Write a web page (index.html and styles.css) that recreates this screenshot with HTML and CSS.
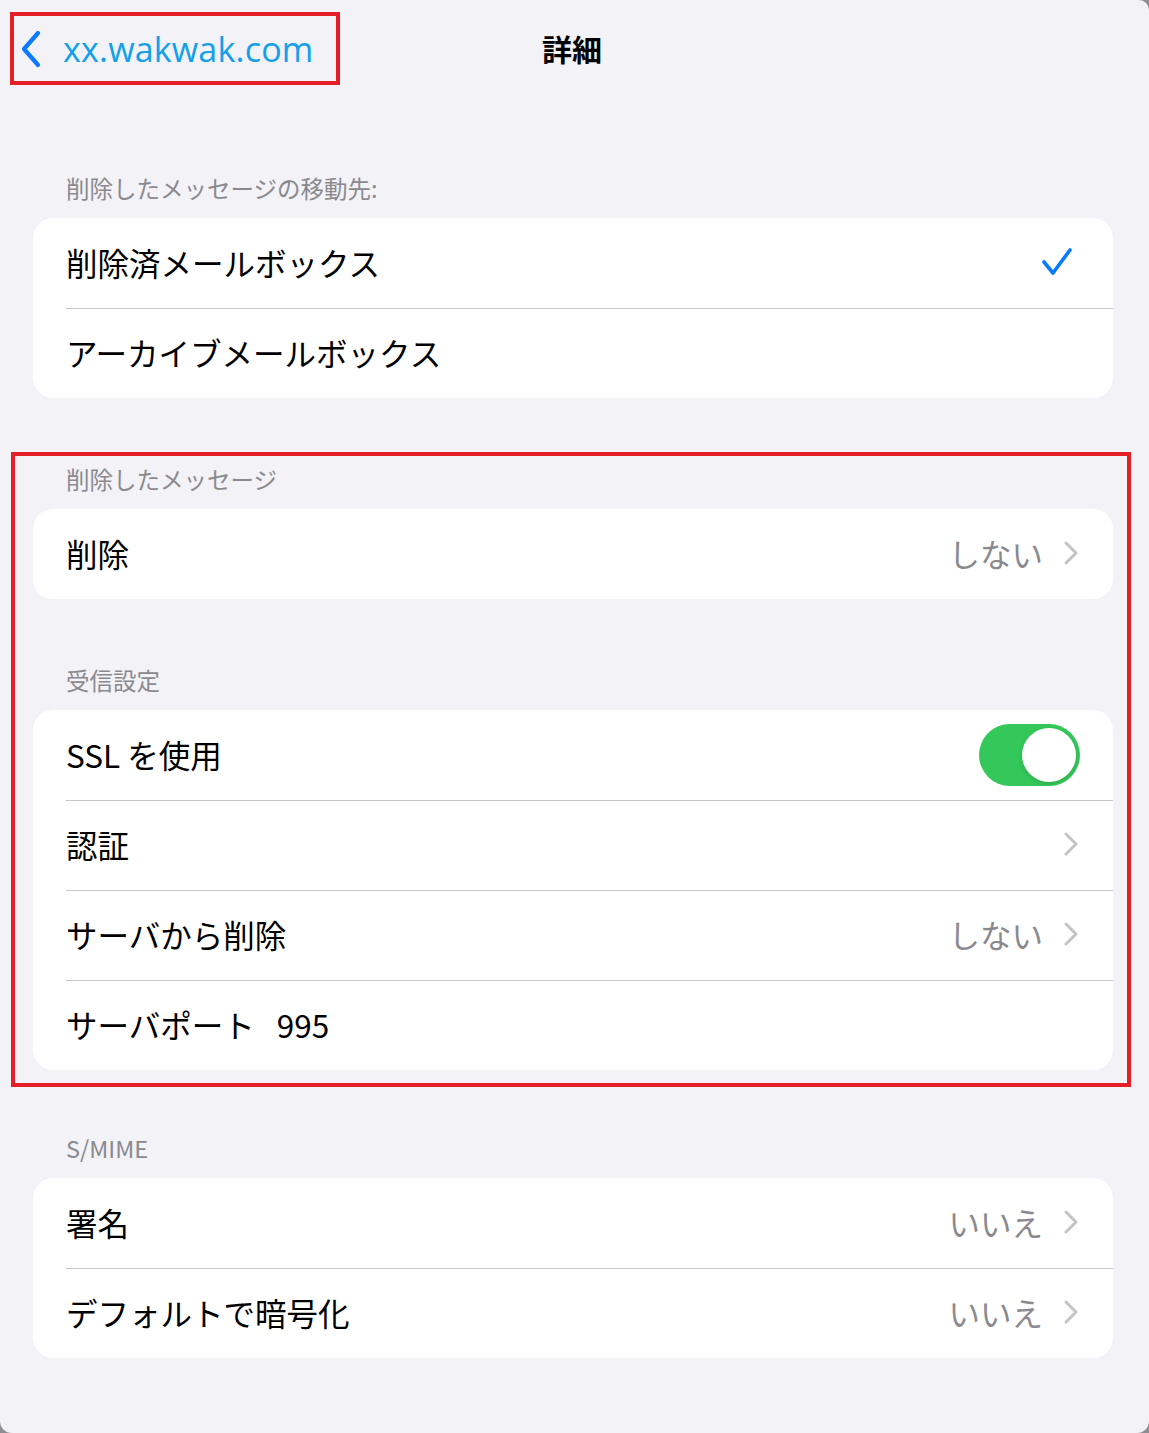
FILE: index.html
```html
<!DOCTYPE html>
<html lang="ja">
<head>
  <meta charset="UTF-8" />
  <meta name="viewport" content="width=device-width, initial-scale=1.0" />
  <title>詳細</title>
  <link rel="stylesheet" href="styles.css">
</head>
<body>
  <div class="screen">
    <header class="navbar">
      <a class="back" href="#">
        <svg class="back-icon" width="22" height="38" viewBox="0 0 22 38">
          <path d="M18 3 L4 19 L18 35" fill="none" stroke="#0a7aff" stroke-width="4.2" stroke-linecap="round" stroke-linejoin="round" />
        </svg>
        <span>xx.wakwak.com</span>
      </a>
      <h1 class="title">詳細</h1>
      <span></span>
    </header>

    <main class="settings">
      <section class="group">
        <h2 class="group-title">削除したメッセージの移動先:</h2>
        <ul class="card">
          <li class="row">
            <div class="row-inner">
              <span class="label">削除済メールボックス</span>
              <svg class="check" width="32" height="30" viewBox="0 0 32 30">
                <path d="M3 15 L12 26 L29 3" fill="none" stroke="#0a7aff" stroke-width="3.6" stroke-linecap="round" stroke-linejoin="round" />
              </svg>
            </div>
          </li>
          <li class="row">
            <div class="row-inner">
              <span class="label">アーカイブメールボックス</span>
            </div>
          </li>
        </ul>
      </section>

      <div class="highlight">
        <section class="group">
          <h2 class="group-title">削除したメッセージ</h2>
          <ul class="card">
            <li class="row">
              <div class="row-inner">
                <span class="label">削除</span>
                <span class="value">しない</span>
                <svg class="chevron" width="16" height="26" viewBox="0 0 16 26">
                  <path d="M3 3 L13 13 L3 23" fill="none" stroke="#c4c4c7" stroke-width="3" stroke-linecap="round" stroke-linejoin="round" />
                </svg>
              </div>
            </li>
          </ul>
        </section>

        <section class="group">
          <h2 class="group-title">受信設定</h2>
          <ul class="card">
            <li class="row">
              <div class="row-inner">
                <span class="label">SSL を使用</span>
                <span class="switch"><span class="knob"></span></span>
              </div>
            </li>
            <li class="row">
              <div class="row-inner">
                <span class="label">認証</span>
                <svg class="chevron push" width="16" height="26" viewBox="0 0 16 26">
                  <path d="M3 3 L13 13 L3 23" fill="none" stroke="#c4c4c7" stroke-width="3" stroke-linecap="round" stroke-linejoin="round" />
                </svg>
              </div>
            </li>
            <li class="row">
              <div class="row-inner">
                <span class="label">サーバから削除</span>
                <span class="value">しない</span>
                <svg class="chevron" width="16" height="26" viewBox="0 0 16 26">
                  <path d="M3 3 L13 13 L3 23" fill="none" stroke="#c4c4c7" stroke-width="3" stroke-linecap="round" stroke-linejoin="round" />
                </svg>
              </div>
            </li>
            <li class="row">
              <div class="row-inner">
                <span class="label">サーバポート</span>
                <span class="port">995</span>
              </div>
            </li>
          </ul>
        </section>
      </div>

      <section class="group group-last">
        <h2 class="group-title">S/MIME</h2>
        <ul class="card">
          <li class="row">
            <div class="row-inner">
              <span class="label">署名</span>
              <span class="value">いいえ</span>
              <svg class="chevron" width="16" height="26" viewBox="0 0 16 26">
                <path d="M3 3 L13 13 L3 23" fill="none" stroke="#c4c4c7" stroke-width="3" stroke-linecap="round" stroke-linejoin="round" />
              </svg>
            </div>
          </li>
          <li class="row">
            <div class="row-inner">
              <span class="label">デフォルトで暗号化</span>
              <span class="value">いいえ</span>
              <svg class="chevron" width="16" height="26" viewBox="0 0 16 26">
                <path d="M3 3 L13 13 L3 23" fill="none" stroke="#c4c4c7" stroke-width="3" stroke-linecap="round" stroke-linejoin="round" />
              </svg>
            </div>
          </li>
        </ul>
      </section>
    </main>
  </div>
</body>
</html>
```

FILE: styles.css
```css
html {
  background-color: #8e8e93;
}

body {
  margin: 0;
  padding: 0;
  font-family: "Noto Sans CJK JP", "Noto Sans", sans-serif;
  color: #000;
}

.screen {
  background-color: #f2f2f7;
  min-height: 1433px;
  box-sizing: border-box;
  border-radius: 0 10px 12px 12px;
}

/* top bar */
.navbar {
  display: grid;
  grid-template-columns: 1fr auto 1fr;
  align-items: center;
  padding-top: 12px;
}

.back {
  justify-self: start;
  display: inline-flex;
  align-items: center;
  gap: 21px;
  height: 73px;
  box-sizing: border-box;
  margin-left: 10px;
  padding: 0 23px 0 6px;
  border: 4px solid #e41f28;
  text-decoration: none;
  color: #12a0ea;
  font-family: "Open Sans", "Noto Sans CJK JP", sans-serif;
  font-size: 34px;
  letter-spacing: 0.2px;
}

.back-icon {
  display: block;
  flex: none;
}

.title {
  margin: 0;
  font-size: 30px;
  font-weight: 700;
  line-height: 1;
  padding-bottom: 2px;
  padding-right: 5px;
}

/* grouped list */
.settings {
  padding: 90px 36px 0 33px;
}

.group {
  margin-bottom: 68px;
}

.group-last {
  margin-top: -3px;
}

.group-title {
  margin: 0 0 15px;
  padding-left: 33px;
  font-size: 23.5px;
  font-weight: 400;
  line-height: 27px;
  padding-bottom: 1px;
  color: #8a8a8e;
}

.card {
  list-style: none;
  margin: 0;
  padding: 0;
  background-color: #fff;
  border-radius: 20px;
  overflow: hidden;
}

.row {
  padding-left: 33px;
}

.row-inner {
  display: flex;
  align-items: center;
  height: 90px;
  box-sizing: border-box;
  padding-right: 34px;
  padding-bottom: 3px;
}

.row + .row .row-inner {
  border-top: 1px solid #c6c6c8;
}

.label {
  font-size: 31.5px;
  white-space: nowrap;
}

.value {
  margin-left: auto;
  font-size: 31.5px;
  color: #8a8a8e;
}

.chevron {
  display: block;
  margin-left: 20px;
  flex: none;
}

.chevron.push {
  margin-left: auto;
}

.check {
  display: block;
  margin-left: auto;
  margin-right: 6px;
}

.port {
  margin-left: 22px;
  font-size: 31.5px;
}

/* on/off switch */
.switch {
  margin-left: auto;
  margin-right: -1px;
  margin-top: 3px;
  display: flex;
  justify-content: flex-end;
  align-items: center;
  width: 101px;
  height: 62px;
  box-sizing: border-box;
  padding: 4px;
  border-radius: 31px;
  background-color: #34c759;
}

.knob {
  width: 54px;
  height: 54px;
  border-radius: 50%;
  background-color: #fff;
  box-shadow: 0 2px 5px rgba(0, 0, 0, 0.12);
}

/* red frame drawn around the receive settings */
.highlight {
  position: relative;
}

.highlight::after {
  content: "";
  position: absolute;
  top: -14px;
  bottom: -17px;
  left: -22px;
  right: -18px;
  border: 4px solid #e41f28;
  pointer-events: none;
}
```
